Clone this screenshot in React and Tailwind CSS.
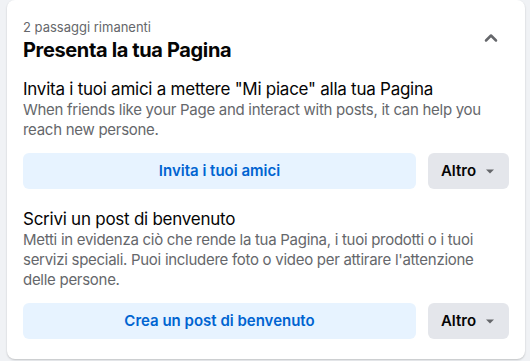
import { ChevronUp } from 'lucide-react';

function Caret() {
  return (
    <svg width="12" height="12" viewBox="0 0 12 12" className="ml-2">
      <path d="M2 4.5h8L6 8.5z" fill="#65676b" />
    </svg>
  );
}

function Step({ title, children, action }) {
  return (
    <div>
      <h3 className="text-[17px] leading-[22px] tracking-[-0.25px] text-[#050505]">{title}</h3>
      <p className="text-[15px] leading-5 tracking-[-0.28px] text-[#65676b]">{children}</p>
      <div className="mt-[13px] flex gap-3">
        <button className="h-9 flex-1 rounded-md bg-[#e7f3ff] text-[15px] font-semibold text-[#0064d1]">
          {action}
        </button>
        <button className="flex h-9 w-[81px] items-center justify-center rounded-md bg-[#e4e6eb] text-[15px] font-semibold text-[#050505]">
          Altro
          <Caret />
        </button>
      </div>
    </div>
  );
}

export default function App() {
  return (
    <div
      className="h-[361px] w-[530px] bg-[#f0f2f5] pl-[7px] pr-[5px]"
      style={{ fontFamily: 'Inter, "Noto Sans", sans-serif' }}
    >
      <div className="h-[359px] rounded-lg bg-white px-4 pt-[19px] shadow-[0_1px_2px_rgba(0,0,0,0.2)]">
        <div className="flex items-start justify-between">
          <div>
            <p className="text-[13px] leading-4 text-[#65676b]">2 passaggi rimanenti</p>
            <h2 className="mt-[3px] text-[20px] font-bold leading-6 tracking-[-0.36px] text-[#050505]">
              Presenta la tua Pagina
            </h2>
          </div>
          <ChevronUp className="mr-2 mt-[9px] h-5 w-5 text-[#65676b]" strokeWidth={3} />
        </div>

        <div className="mt-4">
          <Step
            title={'Invita i tuoi amici a mettere "Mi piace" alla tua Pagina'}
            action="Invita i tuoi amici"
          >
            When friends like your Page and interact with posts, it can help you reach new persone.
          </Step>
        </div>

        <div className="mt-[19px]">
          <Step title="Scrivi un post di benvenuto" action="Crea un post di benvenuto">
            Metti in evidenza ciò che rende la tua Pagina, i tuoi prodotti o i tuoi servizi speciali.
            Puoi includere foto o video per attirare l'attenzione delle persone.
          </Step>
        </div>
      </div>
    </div>
  );
}
